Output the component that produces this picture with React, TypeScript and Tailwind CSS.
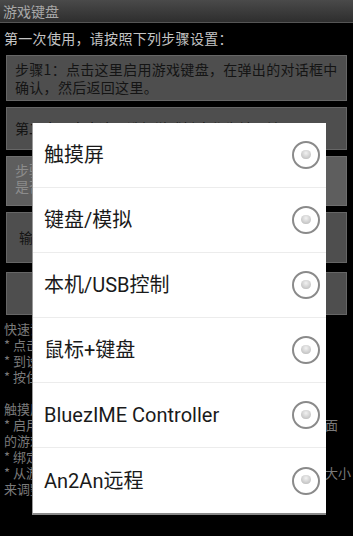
import React from 'react';

const cjk = { fontFamily: '"Noto Sans CJK SC", "Noto Sans", sans-serif' };
const latin = { fontFamily: 'Roboto, "Noto Sans CJK SC", sans-serif' };

const options = ['触摸屏', '键盘/模拟', '本机/USB控制', '鼠标+键盘', 'BluezIME Controller', 'An2An远程'];

const Radio: React.FC = () => (
  <div className="w-[28px] h-[28px] rounded-full border-2 border-[#8a8a8a] flex items-center justify-center">
    <div className="w-[10px] h-[9px] rounded-full bg-[radial-gradient(circle_at_50%_35%,#f2f2f2,#b4b4b4)] -mt-[2px]"></div>
  </div>
);

const App: React.FC = () => {
  const tips = [
    '* 点击设置按钮选择游戏键盘的模式',
    '* 到设置中绑定游戏手柄按键',
    '* 按住屏幕可调出游戏键盘菜单',
    '',
    '触摸屏模式：',
    '* 启用后，游戏键盘会在屏幕上显示虚拟按键，覆盖在画面',
    '的游戏之上',
    '* 绑定按键到屏幕位置',
    '* 从游戏键盘设置菜单中可以调整每个虚拟按键的位置和大小',
    '来调整',
  ];

  return (
    <div className="relative w-[353px] h-[536px] bg-black overflow-hidden" style={cjk}>
      {/* 标题栏 */}
      <div className="h-[23px] bg-gradient-to-b from-[#4a4a4a] to-[#2e2e2e] border-b border-[#555] flex items-center px-[3px]">
        <span className="text-[14px] text-[#a8a8a8] leading-none">游戏键盘</span>
      </div>

      <div className="pt-[6px]">
        <p className="px-[4px] text-[14px] leading-[18px] text-[#c4c4c4] whitespace-nowrap tracking-[0.3px]">
          第一次使用，请按照下列步骤设置：
        </p>

        <div className="mt-[8px] mx-[6px] flex flex-col gap-[6px]">
          <div className="h-[46px] bg-[#4e4e4e] border border-[#666] px-[8px] py-[4px] text-[14px] leading-[18px] text-[#141414] whitespace-nowrap tracking-[0.3px]">
            步骤1：点击这里启用游戏键盘，在弹出的对话框中
            <br />
            确认，然后返回这里。
          </div>
          <div className="h-[43px] bg-[#4e4e4e] border border-[#666] px-[8px] flex items-center text-[14px] text-[#141414] whitespace-nowrap">
            第二步：点击这里选择游戏键盘作为输入法。
          </div>
          <div className="h-[50px] bg-[#5e5e5e] border border-[#6e6e6e] px-[8px] py-[5px] text-[14px] leading-[16px] text-[#8c8c8c] whitespace-nowrap">
            步骤3：选择游戏键盘的模式，
            <br />
            是否需要更多的设置。
          </div>
          <div className="h-[51px] bg-[#4e4e4e] border border-[#666] px-[12px] flex items-center text-[14px] text-[#141414] whitespace-nowrap">
            输入法设置
          </div>
          <div className="h-[43px] bg-[#4e4e4e] border border-[#666] mt-[3px]"></div>
        </div>

        <div className="mt-[6px] px-[4px] text-[13px] leading-[16px] text-[#7a7a7a]">
          <p>快速设置：</p>
          {tips.map((t, i) => (
            <p key={i} className="h-[16px] whitespace-nowrap">{t}</p>
          ))}
        </div>
      </div>

      {/* 选择对话框 */}
      <div className="absolute left-[32px] top-[123px] w-[294px] bg-white border-l border-[#9a9a9a] border-b-2 border-b-[#8a8a8a]">
        {options.map((opt, i) => (
          <div
            key={opt}
            className={`h-[65px] flex items-center justify-between pl-[11px] pr-[6px] ${i < options.length - 1 ? 'border-b border-[#ececec]' : ''}`}
          >
            <span className="text-[20px] text-[#1a1a1a]" style={latin}>{opt}</span>
            <Radio />
          </div>
        ))}
      </div>
    </div>
  );
};

export default App;
